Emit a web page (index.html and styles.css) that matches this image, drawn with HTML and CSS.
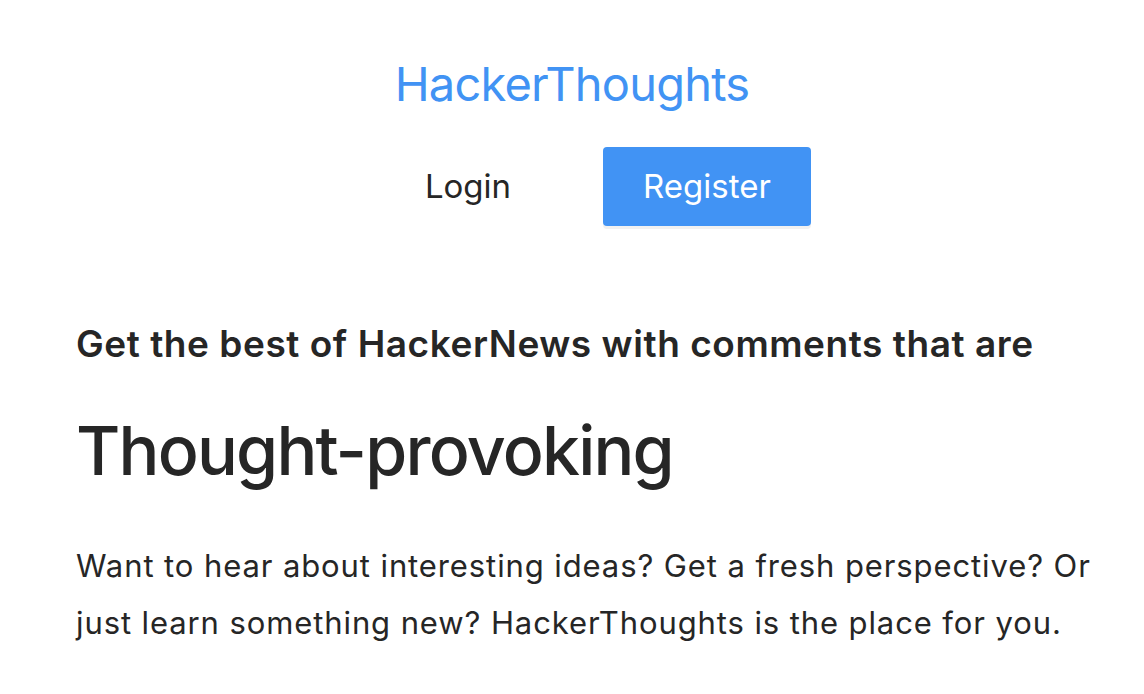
FILE: index.html
```html
<!DOCTYPE html>
<html lang="en">
<head>
<meta charset="utf-8">
<title>HackerThoughts</title>
<link rel="stylesheet" href="styles.css">
</head>
<body>
<header class="header">
  <h1 class="brand">HackerThoughts</h1>
  <nav class="nav">
    <a class="nav-link" href="#">Login</a>
    <a class="btn-primary" href="#">Register</a>
  </nav>
</header>
<main class="hero">
  <h2 class="lead">Get the best of HackerNews with comments that are</h2>
  <h3 class="headline">Thought-provoking</h3>
  <p class="copy">Want to hear about interesting ideas? Get a fresh perspective? Or just learn something new? HackerThoughts is the place for you.</p>
</main>
</body>
</html>
```
FILE: styles.css
```css
* { box-sizing: border-box; }
html, body { margin: 0; padding: 0; background: #fff; }
body {
  font-family: Inter, "Noto Sans", sans-serif;
  color: #262626;
}
.header {
  display: flex;
  flex-direction: column;
  align-items: center;
  padding-top: 56px;
}
.brand {
  margin: 0;
  font-size: 47px;
  font-weight: 400;
  line-height: 56px;
  color: #4193f4;
  letter-spacing: -0.8px;
}
.nav {
  display: flex;
  align-items: center;
  margin-top: 35px;
}
.nav-link {
  display: block;
  width: 270px;
  text-align: center;
  color: #262626;
  text-decoration: none;
  font-size: 33px;
  line-height: 79px;
}
.btn-primary {
  display: block;
  width: 208px;
  height: 79px;
  line-height: 79px;
  text-align: center;
  background: #4193f4;
  color: #fff;
  text-decoration: none;
  font-size: 33px;
  border-radius: 4px;
  box-shadow: 0 3px 0 #f1f1f1;
}
.hero {
  padding: 94px 28px 0 76px;
}
.lead {
  margin: 0;
  font-size: 37px;
  font-weight: 600;
  line-height: 48px;
  letter-spacing: 0.55px;
}
.headline {
  margin: 41px 0 0;
  font-size: 68px;
  font-weight: 500;
  line-height: 82px;
  letter-spacing: -1.8px;
}
.copy {
  margin: 46px 0 0;
  font-size: 31px;
  line-height: 57px;
  font-weight: 400;
  letter-spacing: 0.9px;
}
```
